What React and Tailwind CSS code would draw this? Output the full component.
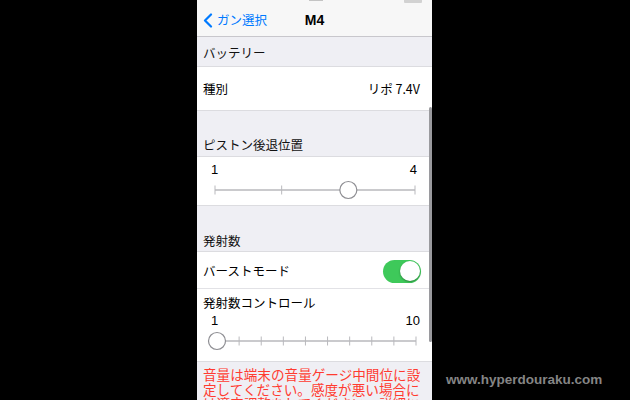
import React from "react";

const jp = { fontFamily: '"Noto Sans CJK JP", "Noto Sans", sans-serif' };

// Stepped slider: track, tick marks and a round thumb
function StepSlider({ steps, value, width }) {
  const gap = width / (steps - 1);
  const ticks = Array.from({ length: steps }, (_, i) => i * gap);
  const knob = (value - 1) * gap;
  return (
    <svg width={width + 24} height="24" viewBox={`-12 -12 ${width + 24} 24`} className="block -ml-[12px]">
      <line x1="0" y1="0" x2={width} y2="0" stroke="#b9b9bd" strokeWidth="1.5" />
      {ticks.map((x) => (
        <line key={x} x1={x} y1="-4.5" x2={x} y2="4.5" stroke="#b9b9bd" strokeWidth="1" />
      ))}
      <circle cx={knob} cy="0" r="8.5" fill="#fff" stroke="#8e8e93" strokeWidth="1.2" />
    </svg>
  );
}

function SectionHeader({ children, className }) {
  return (
    <div className={`px-[6px] text-[12.5px] text-[#111] flex ${className}`}>
      <span className="leading-[16px]">{children}</span>
    </div>
  );
}

export default function App() {
  return (
    <div className="relative w-[630px] h-[400px] bg-black overflow-hidden" style={jp}>
      <div className="relative ml-[197px] w-[235px] h-full bg-[#efeff4]">
        {/* status bar sliver */}
        <div className="h-[5px] bg-[#f7f7f7] flex items-start">
          <span className="ml-[112px] mt-0 w-[14px] h-[1px] bg-[#c4c4c4]" />
          <span className="ml-auto mr-[10px] w-[18px] h-[3px] bg-[#d2d2d2] rounded-b-[1px]" />
        </div>

        {/* navigation bar */}
        <div className="h-[32px] bg-[#f7f7f7] border-b border-[#c8c7cc] grid grid-cols-[1fr_auto_1fr] items-center">
          <div className="flex items-center pl-[6px] text-[#007aff]">
            <svg width="10" height="15" viewBox="0 0 10 15" className="mr-[4px]">
              <path d="M8 1.5 L2 7.5 L8 13.5" fill="none" stroke="#007aff" strokeWidth="2.2" strokeLinecap="round" strokeLinejoin="round" />
            </svg>
            <span className="text-[12.5px] leading-none">ガン選択</span>
          </div>
          <div className="text-[14px] font-bold text-black" style={{ fontFamily: '"Liberation Sans", "Noto Sans CJK JP", sans-serif' }}>
            M4
          </div>
          <div />
        </div>

        <SectionHeader className="h-[29px] items-center pt-[3px]">バッテリー</SectionHeader>

        <div className="h-[45px] bg-white border-y border-[#dcdce0] flex items-center justify-between px-[6px] pt-[2px] text-[12.5px] text-black">
          <span>種別</span>
          <span className="mr-[6px]">リポ 7.4V</span>
        </div>

        <SectionHeader className="h-[45px] items-end pb-[3px]">ピストン後退位置</SectionHeader>

        <div className="h-[50px] bg-white border-y border-[#dcdce0] px-[14px] pt-[5px]">
          <div className="flex justify-between text-[13px] leading-[16px] text-black pr-[1px]" style={{ fontFamily: '"Liberation Sans", sans-serif' }}>
            <span>1</span>
            <span>4</span>
          </div>
          <div className="ml-[4px]">
            <StepSlider steps={4} value={3} width={200} />
          </div>
        </div>

        <SectionHeader className="h-[45px] items-end pb-[2px]">発射数</SectionHeader>

        <div className="bg-white border-t border-[#dcdce0]">
          <div className="h-[37px] flex items-center justify-between pl-[6px] pr-[11px] pt-[2px] border-b border-[#e2e2e6]">
            <span className="text-[12.5px] text-black">バーストモード</span>
            <div className="w-[38px] h-[23px] rounded-full bg-[#3ec95a] flex items-center justify-end pr-[1.5px]">
              <span className="w-[20px] h-[20px] rounded-full bg-white shadow-[0_1px_2px_rgba(0,0,0,0.35)]" />
            </div>
          </div>
          <div className="h-[73px] px-[6px] pt-[6px] border-b border-[#dcdce0]">
            <div className="text-[12.5px] leading-[16px] text-black">発射数コントロール</div>
            <div className="flex justify-between text-[13px] leading-[16px] text-black mt-[2px] pl-[8px] pr-[6px]" style={{ fontFamily: '"Liberation Sans", sans-serif' }}>
              <span>1</span>
              <span>10</span>
            </div>
            <div className="pl-[14px]">
              <StepSlider steps={10} value={1} width={199} />
            </div>
          </div>
        </div>

        <p className="px-[6px] pt-[5px] text-[13.6px] leading-[14.5px] text-[#ff3b30] break-all">
          音量は端末の音量ゲージ中間位に設定してください。感度が悪い場合には適宜調整をしてください。詳細については取扱説明書をご覧ください。
        </p>

        {/* scroll indicator */}
        <div className="absolute left-[232px] top-[107px] w-[2.5px] h-[235px] rounded-full bg-[#9a9a9e]" />
      </div>

      <div
        className="absolute left-[446px] top-[370px] text-[13.5px] font-bold text-[#858585]"
        style={{ fontFamily: '"Liberation Sans", Arial, sans-serif' }}
      >
        www.hyperdouraku.com
      </div>
    </div>
  );
}
